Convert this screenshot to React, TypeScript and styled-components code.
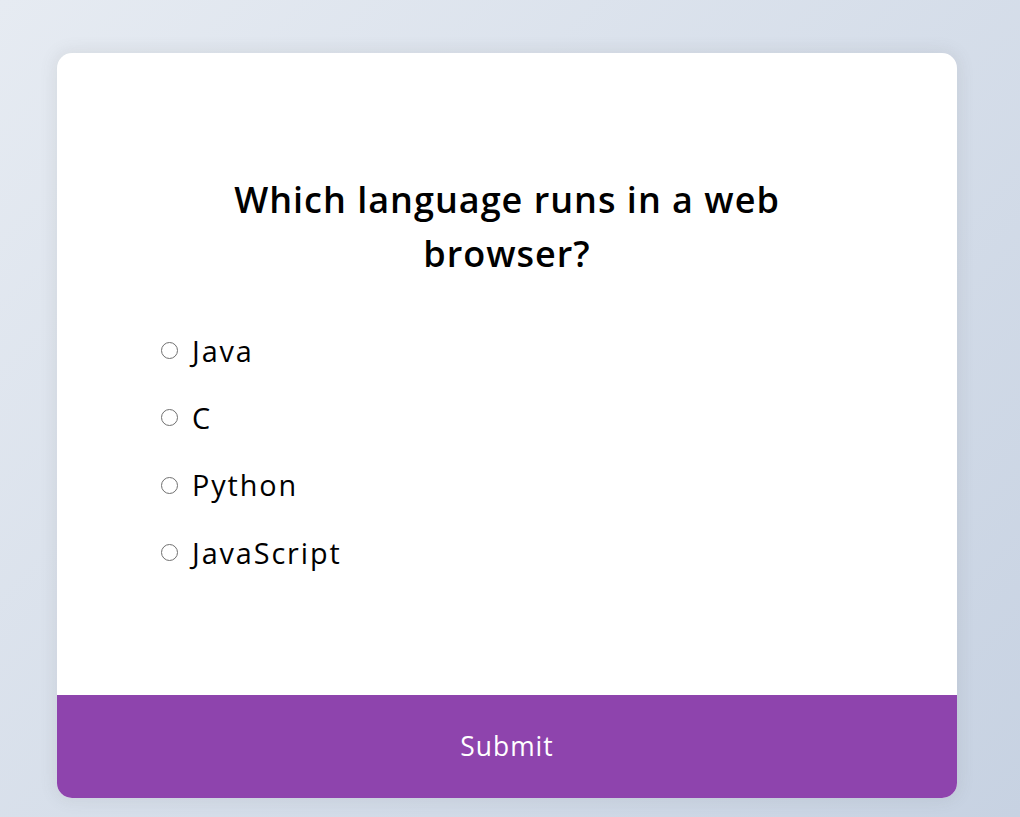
import React from "react";
import styled, { createGlobalStyle } from "styled-components";

const GlobalStyle = createGlobalStyle`
  * { box-sizing: border-box; }
  html, body { margin: 0; padding: 0; }
  body {
    font-family: "Open Sans", "Noto Sans", sans-serif;
    background: linear-gradient(135deg, #e6ebf2 0%, #c7d2e2 100%);
    min-height: 100vh;
    overflow: hidden;
  }
`;

const Page = styled.div`
  min-height: 817px;
  padding: 53px 63px 19px 57px;
  display: flex;
  align-items: flex-start;
`;

const Card = styled.div`
  width: 900px;
  background: #ffffff;
  border-radius: 15px;
  box-shadow: 0 0 15px 3px rgba(100, 100, 100, 0.1);
  overflow: hidden;
`;

const Header = styled.div`
  padding: 96px 96px 97px 96px;
`;

const Question = styled.h2`
  margin: 0 auto;
  padding: 24px;
  max-width: 640px;
  text-align: center;
  font-size: 36px;
  line-height: 54px;
  font-weight: 600;
  color: #000;
  letter-spacing: 1px;
`;

const Options = styled.ul`
  list-style: none;
  padding: 0;
  margin: 24px 0;
`;

const Option = styled.li`
  font-size: 28.8px;
  line-height: 43.2px;
  margin: 24px 0;
  display: flex;
  align-items: center;
  color: #000;
`;

const Radio = styled.input`
  appearance: none;
  -webkit-appearance: none;
  width: 17px;
  height: 17px;
  margin: 0 14px 0 8px;
  border: 1.4px solid #707070;
  border-radius: 50%;
  background: #fff;
  flex: none;
  cursor: pointer;
`;

const Label = styled.label`
  cursor: pointer;
  letter-spacing: 1.9px;
`;

const SubmitButton = styled.button`
  display: block;
  width: 100%;
  border: none;
  background: #8e44ad;
  color: #ffffff;
  font-family: inherit;
  font-size: 26.4px;
  line-height: 40px;
  padding: 31px 0 32px;
  letter-spacing: 1px;
  cursor: pointer;
`;

const answers = [
  { id: "a", text: "Java" },
  { id: "b", text: "C" },
  { id: "c", text: "Python" },
  { id: "d", text: "JavaScript" },
];

export default function App() {
  return (
    <>
      <GlobalStyle />
      <Page>
        <Card>
          <Header>
            <Question>Which language runs in a web browser?</Question>
            <Options>
              {answers.map((a) => (
                <Option key={a.id}>
                  <Radio type="radio" name="answer" id={a.id} />
                  <Label htmlFor={a.id}>{a.text}</Label>
                </Option>
              ))}
            </Options>
          </Header>
          <SubmitButton>Submit</SubmitButton>
        </Card>
      </Page>
    </>
  );
}
